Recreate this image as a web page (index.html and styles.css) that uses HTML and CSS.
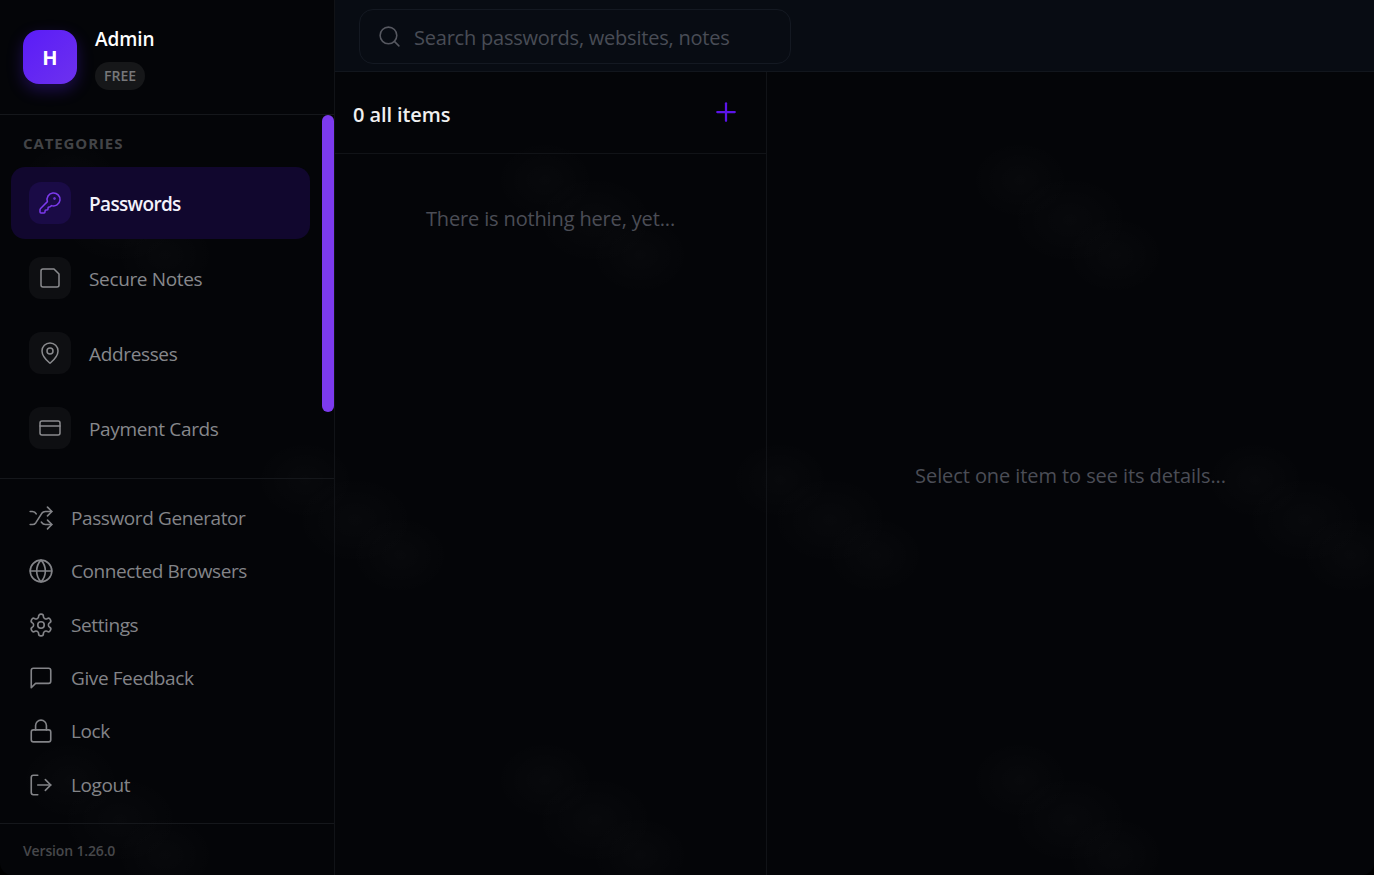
FILE: index.html
```html
<!DOCTYPE html>
<html lang="en">
<head>
    <meta charset="UTF-8">
    <meta name="viewport" content="width=device-width, initial-scale=1.0">
    <title>Vault</title>
    <link rel="stylesheet" href="styles.css">
</head>
<body>

<div class="app">
    <aside class="sidebar">
        <div class="profile">
            <div class="avatar">H</div>
            <div class="profile-info">
                <div class="profile-name">Admin</div>
                <span class="plan">FREE</span>
            </div>
        </div>

        <div class="categories">
            <div class="categories-title">CATEGORIES</div>
            <a class="category active">
                <span class="category-icon">
                    <svg viewBox="0 0 24 24"><path d="M2.586 17.414A2 2 0 0 0 2 18.828V21a1 1 0 0 0 1 1h3a1 1 0 0 0 1-1v-1a1 1 0 0 1 1-1h1a1 1 0 0 0 1-1v-1a1 1 0 0 1 1-1h.172a2 2 0 0 0 1.414-.586l.814-.814a6.5 6.5 0 1 0-4-4z"/><circle cx="16.5" cy="7.5" r=".5"/></svg>
                </span>
                <span class="category-label">Passwords</span>
            </a>
            <a class="category">
                <span class="category-icon">
                    <svg viewBox="0 0 24 24"><path d="M16 3H5a2 2 0 0 0-2 2v14a2 2 0 0 0 2 2h14a2 2 0 0 0 2-2V8z"/></svg>
                </span>
                <span class="category-label">Secure Notes</span>
            </a>
            <a class="category">
                <span class="category-icon">
                    <svg viewBox="0 0 24 24"><path d="M20 10c0 4.993-5.539 10.193-7.399 11.799a1 1 0 0 1-1.202 0C9.539 20.193 4 14.993 4 10a8 8 0 0 1 16 0"/><circle cx="12" cy="10" r="3"/></svg>
                </span>
                <span class="category-label">Addresses</span>
            </a>
            <a class="category">
                <span class="category-icon">
                    <svg viewBox="0 0 24 24"><rect x="2" y="5" width="20" height="14" rx="2"/><path d="M2 10h20"/></svg>
                </span>
                <span class="category-label">Payment Cards</span>
            </a>
            <div class="scroll-thumb"></div>
        </div>

        <nav class="tools">
            <a class="tool">
                <svg viewBox="0 0 24 24"><path d="m18 14 4 4-4 4"/><path d="m18 2 4 4-4 4"/><path d="M2 18h1.973a4 4 0 0 0 3.3-1.7l5.454-8.6a4 4 0 0 1 3.3-1.7H22"/><path d="M2 6h1.972a4 4 0 0 1 3.6 2.2"/><path d="M22 18h-6.041a4 4 0 0 1-3.3-1.8l-.359-.45"/></svg>
                Password Generator
            </a>
            <a class="tool">
                <svg viewBox="0 0 24 24"><circle cx="12" cy="12" r="10"/><path d="M12 2a14.5 14.5 0 0 0 0 20 14.5 14.5 0 0 0 0-20"/><path d="M2 12h20"/></svg>
                Connected Browsers
            </a>
            <a class="tool">
                <svg viewBox="0 0 24 24"><path d="M12.22 2h-.44a2 2 0 0 0-2 2v.18a2 2 0 0 1-1 1.73l-.43.25a2 2 0 0 1-2 0l-.15-.08a2 2 0 0 0-2.73.73l-.22.38a2 2 0 0 0 .73 2.73l.15.1a2 2 0 0 1 1 1.72v.51a2 2 0 0 1-1 1.74l-.15.09a2 2 0 0 0-.73 2.73l.22.38a2 2 0 0 0 2.73.73l.15-.08a2 2 0 0 1 2 0l.43.25a2 2 0 0 1 1 1.73V20a2 2 0 0 0 2 2h.44a2 2 0 0 0 2-2v-.18a2 2 0 0 1 1-1.73l.43-.25a2 2 0 0 1 2 0l.15.08a2 2 0 0 0 2.73-.73l.22-.39a2 2 0 0 0-.73-2.73l-.15-.08a2 2 0 0 1-1-1.74v-.5a2 2 0 0 1 1-1.74l.15-.09a2 2 0 0 0 .73-2.73l-.22-.38a2 2 0 0 0-2.73-.73l-.15.08a2 2 0 0 1-2 0l-.43-.25a2 2 0 0 1-1-1.73V4a2 2 0 0 0-2-2z"/><circle cx="12" cy="12" r="3"/></svg>
                Settings
            </a>
            <a class="tool">
                <svg viewBox="0 0 24 24"><path d="M21 15a2 2 0 0 1-2 2H7l-4 4V5a2 2 0 0 1 2-2h14a2 2 0 0 1 2 2z"/></svg>
                Give Feedback
            </a>
            <a class="tool">
                <svg viewBox="0 0 24 24"><rect x="3" y="11" width="18" height="11" rx="2"/><path d="M7 11V7a5 5 0 0 1 10 0v4"/></svg>
                Lock
            </a>
            <a class="tool">
                <svg viewBox="0 0 24 24"><path d="M9 21H5a2 2 0 0 1-2-2V5a2 2 0 0 1 2-2h4"/><path d="m16 17 5-5-5-5"/><path d="M21 12H9"/></svg>
                Logout
            </a>
        </nav>

        <div class="version">Version 1.26.0</div>
    </aside>

    <main class="main">
        <header class="topbar">
            <label class="search">
                <svg viewBox="0 0 24 24"><circle cx="11" cy="11" r="8"/><path d="m21 21-4.3-4.3"/></svg>
                <span class="search-placeholder">Search passwords, websites, notes</span>
            </label>
        </header>

        <div class="panes">
            <section class="list-pane">
                <div class="list-header">
                    <h2>0 all items</h2>
                    <button class="add-btn" aria-label="Add item">
                        <svg viewBox="0 0 24 24"><path d="M5 12h14"/><path d="M12 5v14"/></svg>
                    </button>
                </div>
                <p class="empty">There is nothing here, yet...</p>
            </section>
            <section class="detail-pane">
                <p class="hint">Select one item to see its details...</p>
            </section>
        </div>
    </main>
</div>

</body>
</html>
```

FILE: styles.css
```css
* {
    box-sizing: border-box;
}
html, body {
    height: 100%;
}
body {
    margin: 0;
    background-color: #000;
    font-family: "Open Sans", "Noto Sans", Arial, sans-serif;
    overflow: hidden;
}
svg {
    fill: none;
    stroke: currentColor;
    stroke-width: 1.5;
    stroke-linecap: round;
    stroke-linejoin: round;
    flex-shrink: 0;
}

.app {
    display: grid;
    grid-template-columns: 335px 1fr;
    height: 875px;
    border-radius: 0 0 12px 12px;
    overflow: hidden;
    background-color: #040508;
    /* Faint smudges of the wallpaper behind the panels */
    background-image:
        radial-gradient(ellipse 50px 40px at 60px 50px, rgba(255, 255, 255, 0.016), transparent 100%),
        radial-gradient(ellipse 60px 45px at 110px 90px, rgba(255, 255, 255, 0.016), transparent 100%),
        radial-gradient(ellipse 50px 40px at 155px 125px, rgba(255, 255, 255, 0.016), transparent 100%),
        radial-gradient(ellipse 50px 40px at 295px 350px, rgba(255, 255, 255, 0.016), transparent 100%),
        radial-gradient(ellipse 60px 45px at 345px 390px, rgba(255, 255, 255, 0.016), transparent 100%),
        radial-gradient(ellipse 50px 40px at 390px 425px, rgba(255, 255, 255, 0.016), transparent 100%);
    background-size: 475px 600px;
    background-position: 485px 130px;
}

/* Sidebar */
.sidebar {
    display: flex;
    flex-direction: column;
    border-right: 1px solid #111317;
}
.profile {
    display: flex;
    align-items: center;
    gap: 18px;
    height: 115px;
    padding: 0 23px;
    border-bottom: 1px solid #15171b;
}
.avatar {
    display: flex;
    align-items: center;
    justify-content: center;
    width: 54px;
    height: 54px;
    border-radius: 16px;
    background: linear-gradient(135deg, #5a1cf8, #6d31ee);
    box-shadow: 0 6px 16px rgba(91, 33, 245, 0.3);
    color: #fff;
    font-size: 20px;
    font-weight: 700;
}
.profile-info {
    display: flex;
    flex-direction: column;
    align-items: flex-start;
    gap: 11px;
    margin-top: 2px;
}
.profile-name {
    color: #fff;
    font-size: 19px;
    font-weight: 600;
    line-height: 24px;
    letter-spacing: -0.1px;
}
.plan {
    padding: 0 9px;
    border-radius: 14px;
    background-color: #161719;
    color: #77777a;
    font-size: 14px;
    font-weight: 600;
    line-height: 28px;
}

.categories {
    position: relative;
    display: flex;
    flex-direction: column;
    height: 364px;
    padding: 0 24px 0 11px;
    border-bottom: 1px solid #15171b;
}
.categories-title {
    height: 52px;
    padding: 19px 0 0 12px;
    color: #434447;
    font-size: 15px;
    font-weight: 700;
    letter-spacing: 0.9px;
    line-height: 19px;
}
.category {
    display: flex;
    align-items: center;
    gap: 18px;
    height: 72px;
    margin-bottom: 3px;
    padding: 0 18px;
    border-radius: 14px;
    color: #87888c;
    font-size: 19px;
    letter-spacing: -0.35px;
    line-height: 28px;
}
.category-label {
    margin-top: 2px;
}
.category.active {
    background-color: #11072e;
    color: #f4f2fb;
    font-weight: 600;
    letter-spacing: -0.65px;
}
.category-icon {
    display: flex;
    align-items: center;
    justify-content: center;
    width: 42px;
    height: 42px;
    border-radius: 12px;
    background-color: #0e0f12;
    color: #8a8b8e;
}
.category-icon svg {
    width: 24px;
    height: 24px;
}
.active .category-icon {
    background-color: #1a0b46;
    color: #7c3aed;
}
.scroll-thumb {
    position: absolute;
    top: 0;
    right: 0;
    width: 12px;
    height: 297px;
    border-radius: 6px;
    background-color: #7c3aed;
}

.tools {
    display: flex;
    flex-direction: column;
    height: 345px;
    padding: 12.4px 0 0 28px;
    border-bottom: 1px solid #15171b;
}
.tool {
    display: flex;
    align-items: center;
    gap: 17px;
    height: 53.3px;
    color: #838488;
    font-size: 19px;
    letter-spacing: -0.4px;
}
.tool svg {
    width: 26px;
    height: 26px;
}
.version {
    padding: 17px 23px 0;
    color: #47484b;
    font-size: 14px;
    font-weight: 600;
    letter-spacing: -0.15px;
}

/* Main part */
.main {
    display: flex;
    flex-direction: column;
    min-width: 0;
}
.topbar {
    flex-shrink: 0;
    height: 72px;
    padding: 9px 24px;
    background-color: #080c13;
    border-bottom: 1px solid #12161d;
}
.search {
    display: flex;
    align-items: center;
    gap: 12px;
    width: 432px;
    height: 55px;
    padding: 0 17px;
    border: 1px solid #141922;
    border-radius: 14px;
    color: #565860;
}
.search svg {
    width: 25px;
    height: 25px;
}
.search-placeholder {
    margin-top: 2px;
    color: #494c56;
    font-size: 20px;
    letter-spacing: -0.22px;
}

.panes {
    flex: 1;
    display: grid;
    grid-template-columns: 432px 1fr;
    min-height: 0;
}
.list-pane {
    border-right: 1px solid #111317;
}
.list-header {
    display: flex;
    align-items: center;
    justify-content: space-between;
    height: 82px;
    padding: 0 25px 0 18px;
    border-bottom: 1px solid #111317;
}
.list-header h2 {
    margin: 4px 0 0;
    color: #f0f0f0;
    font-size: 20px;
    font-weight: 600;
    letter-spacing: -0.1px;
}
.add-btn {
    display: flex;
    width: 30px;
    height: 30px;
    margin-top: -2px;
    padding: 0;
    border: none;
    background: none;
    color: #5b14e8;
}
.add-btn svg {
    width: 30px;
    height: 30px;
    stroke-width: 1.8;
}
.empty {
    margin: 51px 0 0;
    color: #4b4d56;
    font-size: 20px;
    line-height: 27px;
    letter-spacing: -0.15px;
    text-align: center;
}
.detail-pane {
    display: flex;
    align-items: center;
    justify-content: center;
}
.hint {
    margin: 3px 0 0;
    color: #4b4d56;
    font-size: 20px;
    letter-spacing: -0.08px;
}
```
